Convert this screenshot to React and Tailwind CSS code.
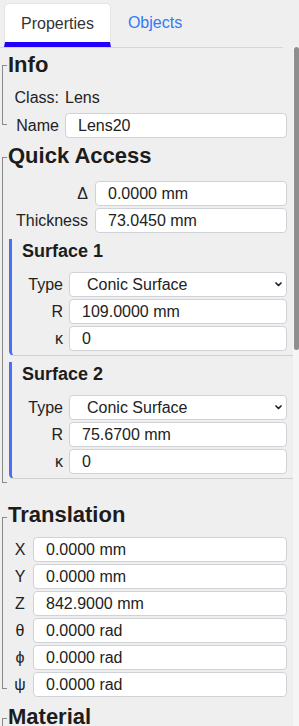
const FONT = { fontFamily: '"Liberation Sans", Arial, sans-serif' };

const Field = ({ value }) => (
    <input
        readOnly
        value={value}
        className="h-[25px] w-full min-w-0 px-[12px] bg-white border border-[#cfd2d6] rounded-[4px] text-[16px] text-[#222] outline-none"
    />
);

const Select = ({ value }) => (
    <div className="h-[25px] w-full flex items-center justify-between pl-[17px] pr-[4px] bg-white border border-[#cfd2d6] rounded-[4px] text-[16px] text-[#222]">
        <span>{value}</span>
        <svg width="7" height="5" viewBox="0 0 7 5" fill="none">
            <path d="M1 1l2.5 2.5L6 1" stroke="#222" strokeWidth="1.7" strokeLinecap="round" strokeLinejoin="round" />
        </svg>
    </div>
);

const Label = ({ children, center }) => (
    <div className={`h-[25px] flex items-center text-[16px] text-[#222] ${center ? 'justify-center' : 'justify-end'}`}>
        {children}
    </div>
);

// left bracket drawn next to each section
const Section = ({ title, bracketTop, bracketHeight, className, children }) => (
    <div className={`flex ${className}`}>
        <div className="w-[5px] shrink-0 border-l border-t border-b border-[#8a8a8a]" style={{ marginTop: bracketTop, height: bracketHeight }} />
        <div className="flex-1 min-w-0 ml-[1px]">
            <h2 className="text-[22px] leading-[26px] font-bold text-[#1c1c1c]">{title}</h2>
            {children}
        </div>
    </div>
);

const Surface = ({ title, r, className }) => (
    <div className={`ml-[1px] pl-[10px] pr-[6px] pt-[1px] pb-[4px] border-l-[3px] border-l-[#4c6ef5] border-b border-b-[#d0d0d0] rounded-bl-[5px] ${className}`}>
        <h3 className="text-[18px] leading-[22px] font-bold text-[#1c1c1c]">{title}</h3>
        <div className="mt-[10px] grid grid-cols-[41px_1fr] gap-x-[6px] gap-y-[2px]">
            <Label>Type</Label>
            <Select value="Conic Surface" />
            <Label>R</Label>
            <Field value={r} />
            <Label>κ</Label>
            <Field value="0" />
        </div>
    </div>
);

const translation = [
    ['X', '0.0000 mm'],
    ['Y', '0.0000 mm'],
    ['Z', '842.9000 mm'],
    ['θ', '0.0000 rad'],
    ['ϕ', '0.0000 rad'],
    ['ψ', '0.0000 rad'],
];

export default function App() {
    return (
        <div className="w-[299px] h-[726px] overflow-hidden flex bg-[#efefef] text-[#222]" style={FONT}>
            <div className="flex-1 min-w-0 flex flex-col overflow-hidden">
                {/* Tabs */}
                <div className="flex pt-[3px] pl-[4px] mr-[10px] border-b border-[#d6d6d6] shrink-0">
                    <div className="h-[44px] px-[16px] pt-[1px] flex items-center bg-white rounded-t-[5px] border-x border-t border-x-[#e4e4e4] border-t-[#e4e4e4] border-b-[5px] border-b-[#2200ff] text-[16px] text-[#333]">
                        Properties
                    </div>
                    <div className="h-[44px] px-[17px] pt-[1px] pb-[5px] flex items-center text-[16px] text-[#3478f6]">
                        Objects
                    </div>
                </div>

                <div className="pl-[2px]">
                    <Section title="Info" bracketTop={13} bracketHeight={60} className="mt-[4px]">
                        <div className="mt-[7px] pr-[6px] grid grid-cols-[51px_1fr] gap-x-[6px] gap-y-[3px]">
                            <Label>Class:</Label>
                            <div className="h-[25px] flex items-center text-[16px]">Lens</div>
                            <Label>Name</Label>
                            <Field value="Lens20" />
                        </div>
                    </Section>

                    <Section title="Quick Access" bracketTop={14} bracketHeight={326} className="mt-[5px]">
                        <div className="mt-[12px] pr-[6px] grid grid-cols-[80px_1fr] gap-x-[7px] gap-y-[2px]">
                            <Label>Δ</Label>
                            <Field value="0.0000 mm" />
                            <Label>Thickness</Label>
                            <Field value="73.0450 mm" />
                        </div>
                        <Surface title="Surface 1" r="109.0000 mm" className="mt-[6px]" />
                        <Surface title="Surface 2" r="75.6700 mm" className="mt-[6px]" />
                    </Section>

                    <Section title="Translation" bracketTop={15} bracketHeight={172} className="mt-[19px]">
                        <div className="mt-[9px] pr-[6px] grid grid-cols-[24px_1fr] gap-x-[1px] gap-y-[2px]">
                            {translation.map(([k, v]) => (
                                <div key={k} className="contents">
                                    <Label center>{k}</Label>
                                    <Field value={v} />
                                </div>
                            ))}
                        </div>
                    </Section>

                    <Section title="Material" bracketTop={14} bracketHeight={80} className="mt-[7px]">
                        <div className="h-[60px]" />
                    </Section>
                </div>
            </div>

            {/* scrollbar */}
            <div className="w-[6px] shrink-0 flex flex-col">
                <div className="h-[47px] shrink-0" />
                <div className="flex-1 bg-[#f5f5f5]">
                    <div className="ml-[1px] w-[5px] h-[303px] rounded-full bg-[#8f8f8f]" />
                </div>
            </div>
        </div>
    );
}
